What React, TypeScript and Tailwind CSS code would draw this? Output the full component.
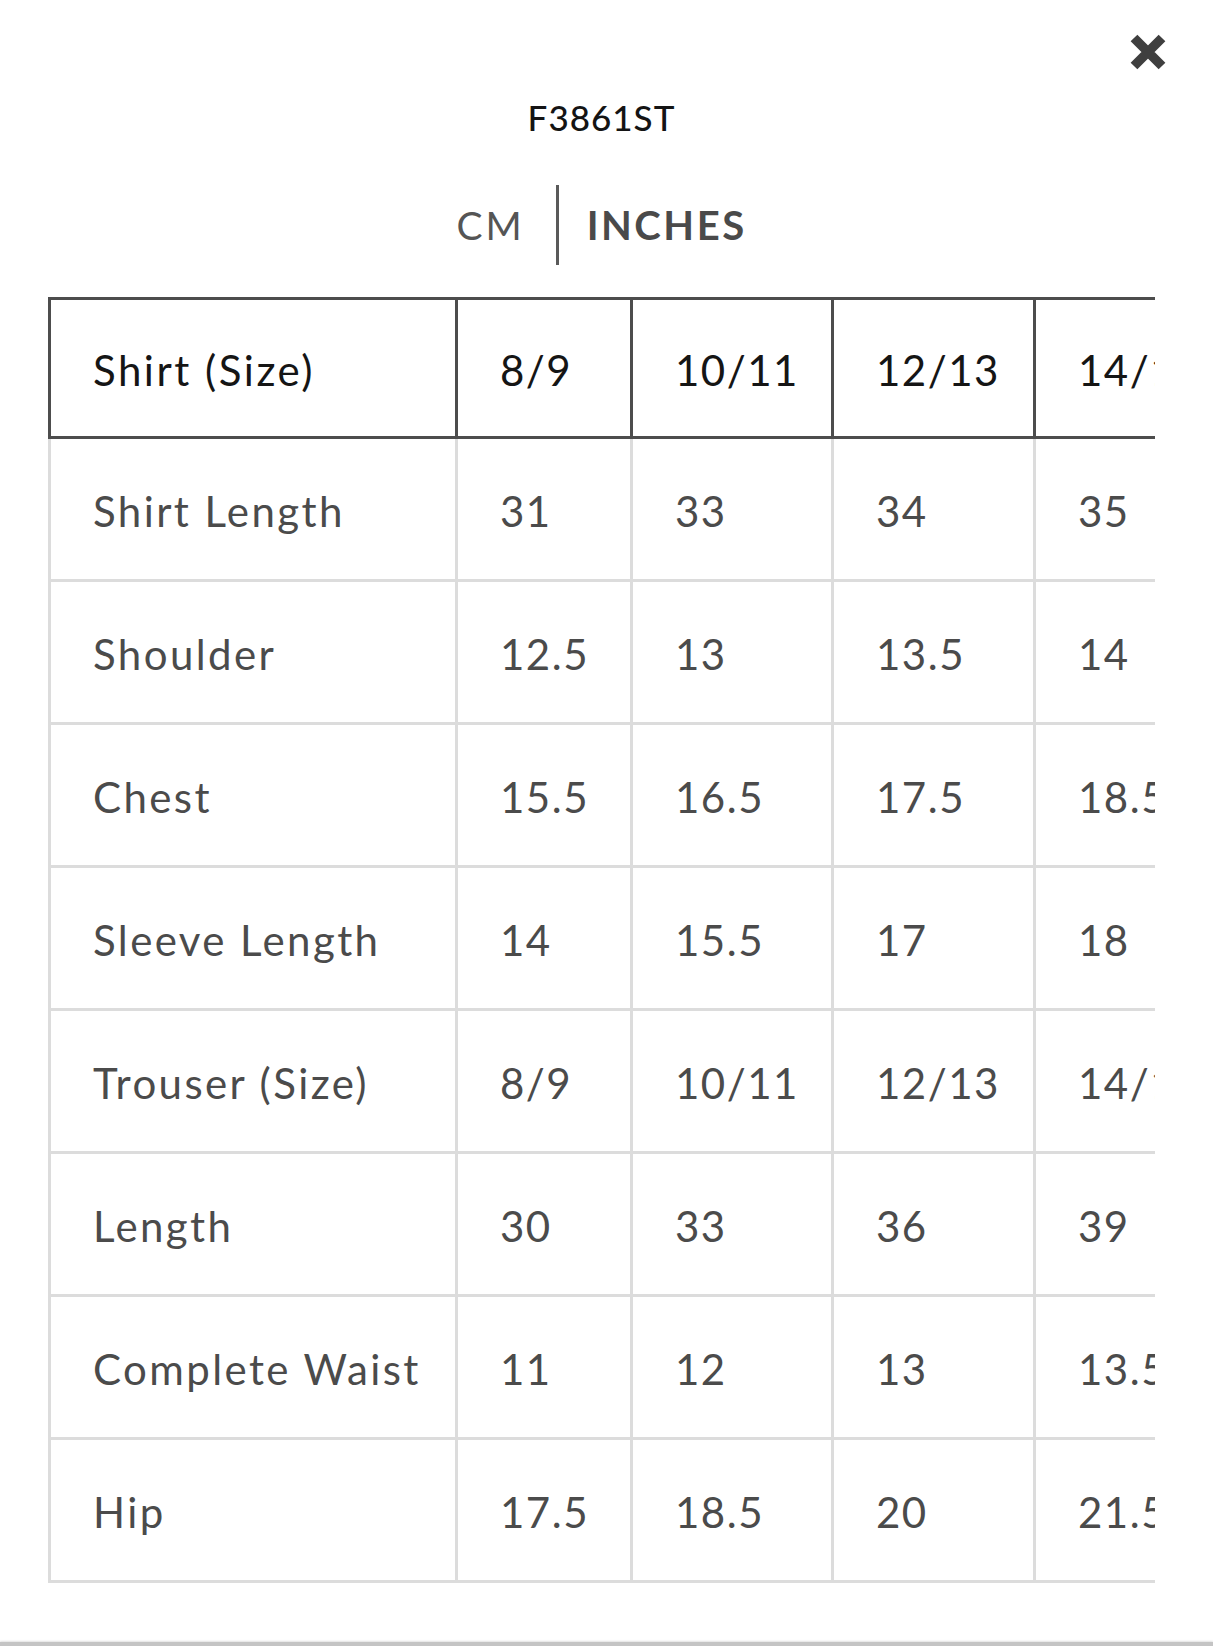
import React from 'react';

const header = ['Shirt (Size)', '8/9', '10/11', '12/13', '14/15'];

const rows: string[][] = [
  ['Shirt Length', '31', '33', '34', '35'],
  ['Shoulder', '12.5', '13', '13.5', '14'],
  ['Chest', '15.5', '16.5', '17.5', '18.5'],
  ['Sleeve Length', '14', '15.5', '17', '18'],
  ['Trouser (Size)', '8/9', '10/11', '12/13', '14/15'],
  ['Length', '30', '33', '36', '39'],
  ['Complete Waist', '11', '12', '13', '13.5'],
  ['Hip', '17.5', '18.5', '20', '21.5'],
];

function CloseIcon() {
  return (
    <svg width="40" height="40" viewBox="0 0 40 40" aria-hidden="true">
      <path d="M6 6 L34 34 M34 6 L6 34" stroke="#3f3f3f" strokeWidth="9.5" strokeLinecap="butt" />
    </svg>
  );
}

export default function App() {
  return (
    <div className="relative min-h-[1646px] bg-white font-['Lato','Noto_Sans',sans-serif]">
      <button className="absolute right-[45px] top-[32px]" aria-label="Close">
        <CloseIcon />
      </button>

      <div className="pl-[48px] pr-[58px]">
        <h1 className="pt-[100px] text-center text-[35px] font-medium leading-none tracking-[1px] text-[#141414]">
          F3861ST
        </h1>

        <div className="mt-[50px] flex h-[80px] items-center justify-center">
          <span className="pr-[31px] text-[39px] leading-none tracking-[3px] text-[#555]">CM</span>
          <span className="h-[80px] w-[3px] bg-[#5a5a5a]" />
          <span className="pl-[28px] text-[40px] font-bold leading-none tracking-[2.5px] text-[#4a4a4a]">INCHES</span>
        </div>

        <div className="mt-[32px] overflow-hidden">
          <div className="grid w-[1188px] grid-cols-[410px_175px_201px_202px_200px]">
            {header.map((h, i) => (
              <div
                key={h}
                className={`flex h-[142px] items-center border-y-[3px] border-r-[3px] border-[#4d4d4d] pl-[42px] pt-[3px] text-[42px] leading-none text-[#151515] ${i === 0 ? 'border-l-[3px] tracking-[2.5px]' : 'tracking-[1.5px]'}`}
              >
                {h}
              </div>
            ))}
            {rows.map((row) =>
              row.map((cell, i) => (
                <div
                  key={row[0] + i}
                  className={`flex h-[143px] items-center border-b-[3px] border-r-[3px] border-[#dcdcdc] pl-[42px] pt-[3px] text-[42px] leading-none text-[#4b4b4b] ${i === 0 ? 'border-l-[3px] tracking-[2.4px]' : 'tracking-[1.5px]'}`}
                >
                  {cell}
                </div>
              )),
            )}
          </div>
        </div>
      </div>

      <div className="mt-[59px] h-[4px] w-full bg-[#c4c4c4] shadow-[0_-1px_2px_rgba(0,0,0,0.12)]" />
    </div>
  );
}
